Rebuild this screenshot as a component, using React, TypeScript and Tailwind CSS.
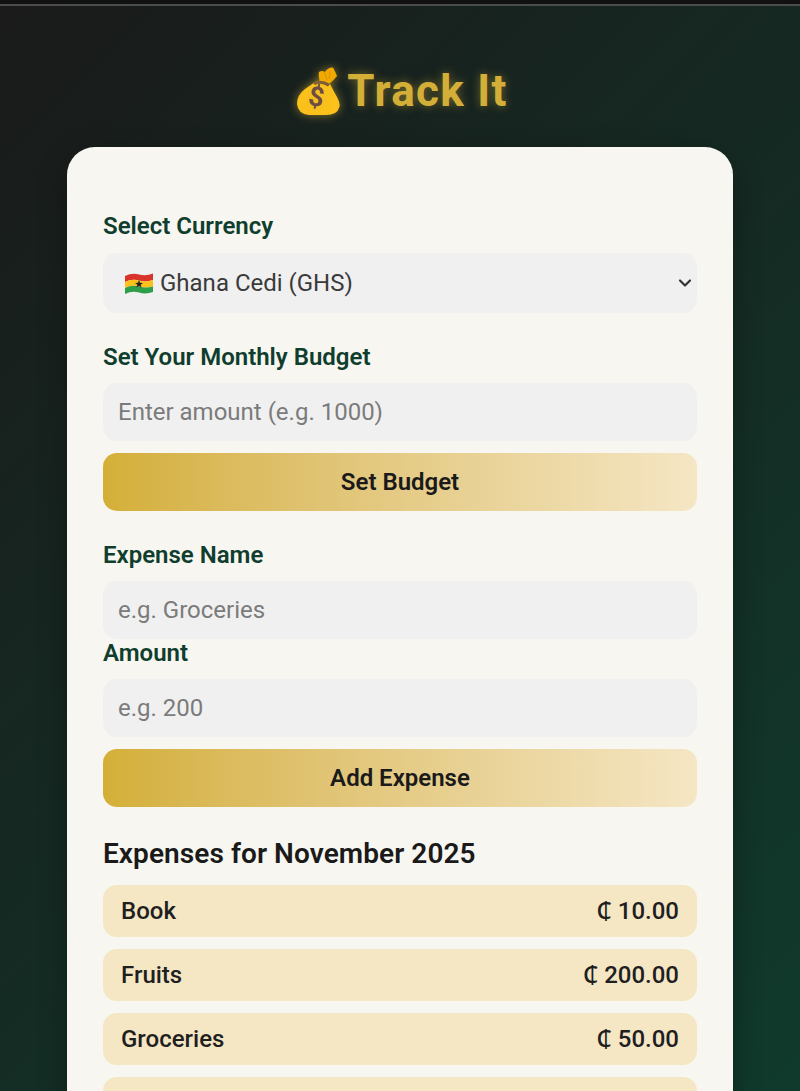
import { ChevronDown } from 'lucide-react';

const expenses = [
  { name: 'Book', amount: '10.00' },
  { name: 'Fruits', amount: '200.00' },
  { name: 'Groceries', amount: '50.00' },
  { name: '', amount: '' },
];

function MoneyBag() {
  return (
    <svg width="43" height="48" viewBox="0 0 43 48" className="drop-shadow-[0_0_5px_rgba(212,175,55,0.6)]">
      {/* knot */}
      <path d="M23 15 Q21 8 22 5 Q25 3 28 5 Q31 0 36 0.5 Q38 4 40 9 Q37 13 32 17 Z" fill="#f2a900" />
      <path d="M27 5 Q29 9 30 13 M33 4 Q33 8 32 12" stroke="#dc9200" strokeWidth="1" fill="none" />
      {/* body */}
      <path d="M18 15 Q25 11 33 17 Q36 23 40 30 Q44 37 42 41 Q40 48 29 48 L12 48 Q1 47 0 37 Q0 28 8 22 Q14 18 18 15 Z" fill="#fcc21b" />
      <path d="M16 16 Q24 11 33 17 L31 19.5 Q24 15 18 18 Z" fill="#7a5a35" />
      <text x="20" y="39" fontSize="27" fontWeight="700" fill="#6d4c41" textAnchor="middle" transform="rotate(10 20 30)" fontFamily="Roboto, sans-serif">$</text>
    </svg>
  );
}

function GhanaFlag() {
  return (
    <svg width="28" height="21" viewBox="0 0 28 21">
      <path d="M0 3 Q7 -0.5 14 1.5 T28 0.5 V7 Q21 9.5 14 7.5 T0 9 Z" fill="#d9342c" />
      <path d="M0 9 Q7 5.5 14 7.5 T28 7 V13.5 Q21 15.5 14 13.5 T0 15 Z" fill="#fcc21b" />
      <path d="M0 15 Q7 11.5 14 13.5 T28 13.5 V19 Q21 21.5 14 19.5 T0 21 Z" fill="#2e9e4a" />
      <path d="M14 6.8 L15 9.8 L18 9.9 L15.6 11.7 L16.5 14.6 L14 12.9 L11.5 14.6 L12.4 11.7 L10 9.9 L13 9.8 Z" fill="#222" />
    </svg>
  );
}

function Label({ children, className = '' }: { children: React.ReactNode; className?: string }) {
  return <label className={`block text-[24px] leading-[28px] font-semibold text-[#0f3d2e] ${className}`}>{children}</label>;
}

function TextField({ placeholder }: { placeholder: string }) {
  return (
    <input
      placeholder={placeholder}
      className="block w-full h-[58px] rounded-[14px] bg-[#f0f0f0] px-[15px] text-[24px] text-[#222] placeholder:text-[#7b7b7b] outline-none"
    />
  );
}

function GoldButton({ children, className = '' }: { children: React.ReactNode; className?: string }) {
  return (
    <button className={`block w-full h-[58px] rounded-[14px] bg-gradient-to-r from-[#d4af37] to-[#f5e6c4] text-[24px] font-semibold text-[#1a1a1a] ${className}`}>
      {children}
    </button>
  );
}

export default function App() {
  return (
    <div className="h-[1091px] overflow-hidden bg-[#0f3d2e] bg-[linear-gradient(135deg,#1a1a1a,#0f3d2e)] bg-[length:100%_1250px] bg-no-repeat font-['Roboto',sans-serif]">
      <div className="h-[6px] bg-[#111] border-b-2 border-[#4a4d4c]" />
      <h1 className="mt-[54px] h-[61px] pl-[5px] flex items-center justify-center text-[44px] font-bold tracking-[1.3px] text-[#d4af37] [text-shadow:0_0_10px_rgba(212,175,55,0.5)]">
        <MoneyBag />
        <span className="ml-[7px]">Track It</span>
      </h1>
      <main className="mx-auto mt-[26px] w-[666px] rounded-t-[28px] bg-[#f8f6f0] px-[36px] pt-[65px] pb-10 shadow-[0_10px_30px_rgba(0,0,0,0.3)]">
        <Label>Select Currency</Label>
        <div className="mt-[13px] h-[60px] rounded-[14px] bg-[#f0f0f0] pl-[22px] pr-[2px] flex items-center justify-between text-[24px] text-[#3a3a3a]">
          <span className="flex items-center gap-[7px]">
            <GhanaFlag />
            Ghana Cedi (GHS)
          </span>
          <ChevronDown size={20} strokeWidth={2.6} className="text-[#333]" />
        </div>

        <Label className="mt-[30px]">Set Your Monthly Budget</Label>
        <div className="mt-[12px]">
          <TextField placeholder="Enter amount (e.g. 1000)" />
        </div>
        <GoldButton className="mt-[12px]">Set Budget</GoldButton>

        <Label className="mt-[30px]">Expense Name</Label>
        <div className="mt-[12px]">
          <TextField placeholder="e.g. Groceries" />
        </div>
        <Label>Amount</Label>
        <div className="mt-[12px]">
          <TextField placeholder="e.g. 200" />
        </div>
        <GoldButton className="mt-[12px]">Add Expense</GoldButton>

        <h2 className="mt-[29px] h-[36px] leading-[36px] text-[28px] font-semibold tracking-[0.08px] text-[#1a1a1a]">Expenses for November 2025</h2>
        <ul className="mt-[13px] flex flex-col gap-[12px]">
          {expenses.map((e, i) => (
            <li key={i} className="h-[52px] rounded-[14px] bg-[#f5e6c4] px-[18px] flex items-center justify-between text-[24px] leading-[28px] font-medium text-[#1f1f1f]">
              <span>{e.name}</span>
              {e.amount && (
                <span>
                  <span className="font-['Noto_Sans',sans-serif] leading-none">₵</span> {e.amount}
                </span>
              )}
            </li>
          ))}
        </ul>
      </main>
    </div>
  );
}
